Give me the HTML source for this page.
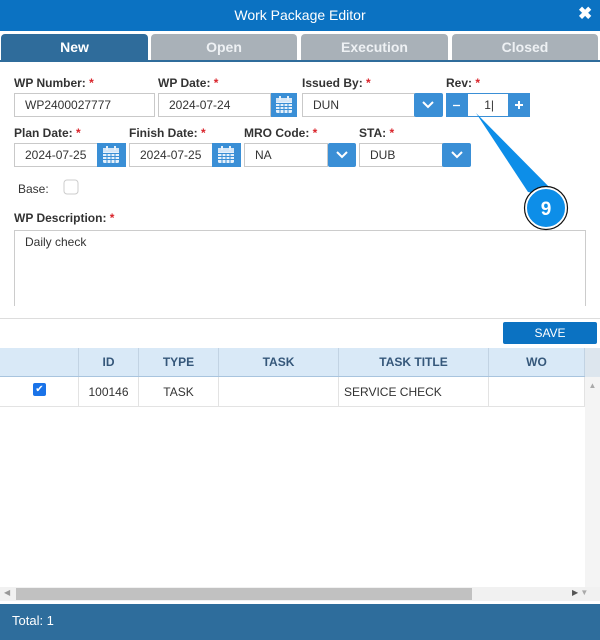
<!DOCTYPE html>
<html><head><style>
*{box-sizing:border-box;margin:0;padding:0}
body{width:600px;height:640px;position:relative;overflow:hidden;background:#fff;font-family:"Liberation Sans",Arial,sans-serif;font-size:12px;color:#333}
.a{position:absolute}
.title{left:0;top:0;width:600px;height:31px;background:#0b72c2;color:#fff;text-align:center;font-size:14px;line-height:31px}
.tab{top:34px;height:26px;background:#a9b1b8;color:#eef1f4;text-align:center;font-size:14px;font-weight:bold;line-height:27px;border-radius:4px 4px 0 0}
.lbl{font-size:12px;color:#333;font-weight:bold}
.lbl b{color:#d9242b}
.inp{height:24px;border:1px solid #c9c9c9;background:#fff;font-size:12px;line-height:22px;padding-left:10px;color:#333}
.th{top:348px;height:29px;line-height:29px;text-align:center;font-weight:bold;color:#35577a;border-right:1px solid #c2d3e3;background:#d9e9f7;font-size:12px}
.td{top:377px;height:30px;line-height:30px;text-align:center;border-right:1px solid #e3e3e3;border-bottom:1px solid #e3e3e3;font-size:12px}
</style></head><body>
<div class="a title">Work Package Editor</div>
<div class="a" style="left:578px;top:4px;color:#fff;font-size:17px;font-weight:bold">✖</div>
<div class="a" style="left:0;top:60px;width:600px;height:2px;background:#2f6c9b"></div>
<div class="a tab" style="left:1px;width:147px;background:#2f6c9b;color:#fff">New</div>
<div class="a tab" style="left:151px;width:146px">Open</div>
<div class="a tab" style="left:301px;width:147px">Execution</div>
<div class="a tab" style="left:452px;width:146px">Closed</div>

<div class="a lbl" style="left:14px;top:76px">WP Number: <b>*</b></div>
<div class="a lbl" style="left:158px;top:76px">WP Date: <b>*</b></div>
<div class="a lbl" style="left:302px;top:76px">Issued By: <b>*</b></div>
<div class="a lbl" style="left:446px;top:76px">Rev: <b>*</b></div>
<div class="a inp" style="left:14px;top:93px;width:141px">WP2400027777</div>
<div class="a inp" style="left:158px;top:93px;width:113px">2024-07-24</div>
<div class="a inp" style="left:302px;top:93px;width:113px">DUN</div>
<div class="a inp" style="left:467px;top:93px;width:42px;border:none;border-top:1px solid #3a8fd6;border-bottom:1px solid #3a8fd6;text-align:right;padding-right:15px">1<span style="font-weight:normal">|</span></div>

<div class="a lbl" style="left:14px;top:126px">Plan Date: <b>*</b></div>
<div class="a lbl" style="left:129px;top:126px">Finish Date: <b>*</b></div>
<div class="a lbl" style="left:244px;top:126px">MRO Code: <b>*</b></div>
<div class="a lbl" style="left:359px;top:126px">STA: <b>*</b></div>
<div class="a inp" style="left:14px;top:143px;width:84px">2024-07-25</div>
<div class="a inp" style="left:129px;top:143px;width:84px">2024-07-25</div>
<div class="a inp" style="left:244px;top:143px;width:84px">NA</div>
<div class="a inp" style="left:359px;top:143px;width:84px">DUB</div>

<svg class="a" style="left:0;top:0" width="600" height="200">
<defs>
<g id="cal">
<rect x="0" y="2" width="16" height="15" rx="1.5" fill="#e6f1fb"/>
<rect x="0" y="2" width="16" height="4" fill="#d4e6f7"/>
<rect x="3" y="0" width="2" height="4" fill="#e6f1fb"/><rect x="11" y="0" width="2" height="4" fill="#e6f1fb"/>
<g stroke="#3a8fd6" stroke-width="1"><path d="M0 7.5h16M0 10.5h16M0 13.5h16M4 7v10M8 7v10M12 7v10"/></g>
</g>
</defs>
<g fill="#3a8fd6">
<rect x="271" y="93" width="26" height="24"/><rect x="97" y="143" width="29" height="24"/><rect x="212" y="143" width="29" height="24"/>
<rect x="414" y="93" width="29" height="24" rx="2"/><rect x="328" y="143" width="28" height="24" rx="2"/><rect x="442" y="143" width="29" height="24" rx="2"/>
<rect x="446" y="93" width="22" height="24"/><rect x="508" y="93" width="22" height="24"/>
</g>
<use href="#cal" x="276" y="96"/><use href="#cal" x="103" y="146"/><use href="#cal" x="218" y="146"/>
<g fill="none" stroke="#fff" stroke-width="2">
<path d="M423 102l5 5 5-5"/><path d="M337 152l5 5 5-5"/><path d="M452 152l5 5 5-5"/>
<path d="M453 105.5h7" stroke-width="1.3"/><path d="M515 105h8M519 101v8"/>
</g>
<rect x="64" y="180" width="14" height="14" rx="3" fill="#fff" stroke="#ccc"/>
</svg>
<div class="a lbl" style="left:18px;top:182px;font-weight:normal">Base:</div>
<div class="a lbl" style="left:14px;top:211px">WP Description: <b>*</b></div>
<div class="a" style="left:14px;top:230px;width:572px;height:76px;border:1px solid #ccc;border-bottom:none;padding:4px 10px">Daily check</div>
<div class="a" style="left:0;top:318px;width:600px;height:1px;background:#ddd"></div>
<div class="a" style="left:503px;top:322px;width:94px;height:22px;background:#0b72c2;color:#fff;text-align:center;line-height:22px;border-radius:2px">SAVE</div>

<div class="a th" style="left:0;width:79px"></div>
<div class="a th" style="left:79px;width:60px">ID</div>
<div class="a th" style="left:139px;width:80px">TYPE</div>
<div class="a th" style="left:219px;width:120px">TASK</div>
<div class="a th" style="left:339px;width:150px">TASK TITLE</div>
<div class="a th" style="left:489px;width:96px">WO</div>
<div class="a th" style="left:585px;width:15px;border:none;background:#dde6ee"></div>
<div class="a" style="left:0;top:376px;width:585px;height:1px;background:#a8c4de"></div>
<div class="a td" style="left:0;width:79px"></div>
<div class="a" style="left:33px;top:383px;width:13px;height:13px;background:#1a73e8;border-radius:2px;color:#fff;font-size:10px;line-height:13px;text-align:center">✔</div>
<div class="a td" style="left:79px;width:60px">100146</div>
<div class="a td" style="left:139px;width:80px">TASK</div>
<div class="a td" style="left:219px;width:120px"></div>
<div class="a td" style="left:339px;width:150px;text-align:left;padding-left:5px">SERVICE CHECK</div>
<div class="a td" style="left:489px;width:96px"></div>
<div class="a" style="left:585px;top:377px;width:15px;height:210px;background:#f4f4f4;color:#aaa;font-size:8px;text-align:center;padding-top:4px">▲</div>
<div class="a" style="left:0;top:587px;width:600px;height:14px;background:#f1f1f1"></div>
<div class="a" style="left:16px;top:588px;width:456px;height:12px;background:#c1c1c1"></div>
<div class="a" style="left:4px;top:588px;color:#999;font-size:8px">◀</div>
<div class="a" style="left:572px;top:588px;color:#555;font-size:8px">▶ <span style="color:#aaa">▼</span></div>
<div class="a" style="left:0;top:604px;width:600px;height:36px;background:#2e6d9c;color:#fff;font-size:13px;line-height:33px;padding-left:12px">Total: 1</div>

<svg class="a" style="left:0;top:0" width="600" height="640">
<path d="M476 113 L528 192 L560 198 Z" fill="#0d8ee8"/>
<circle cx="546" cy="208" r="20" fill="#0d8ee8" stroke="#fff" stroke-width="2"/>
<circle cx="546" cy="208" r="21.5" fill="none" stroke="#111" stroke-width="1.2"/>
<text x="546" y="215" fill="#fff" font-family="Liberation Sans" font-weight="bold" font-size="19" text-anchor="middle">9</text>
</svg>
</body></html>
